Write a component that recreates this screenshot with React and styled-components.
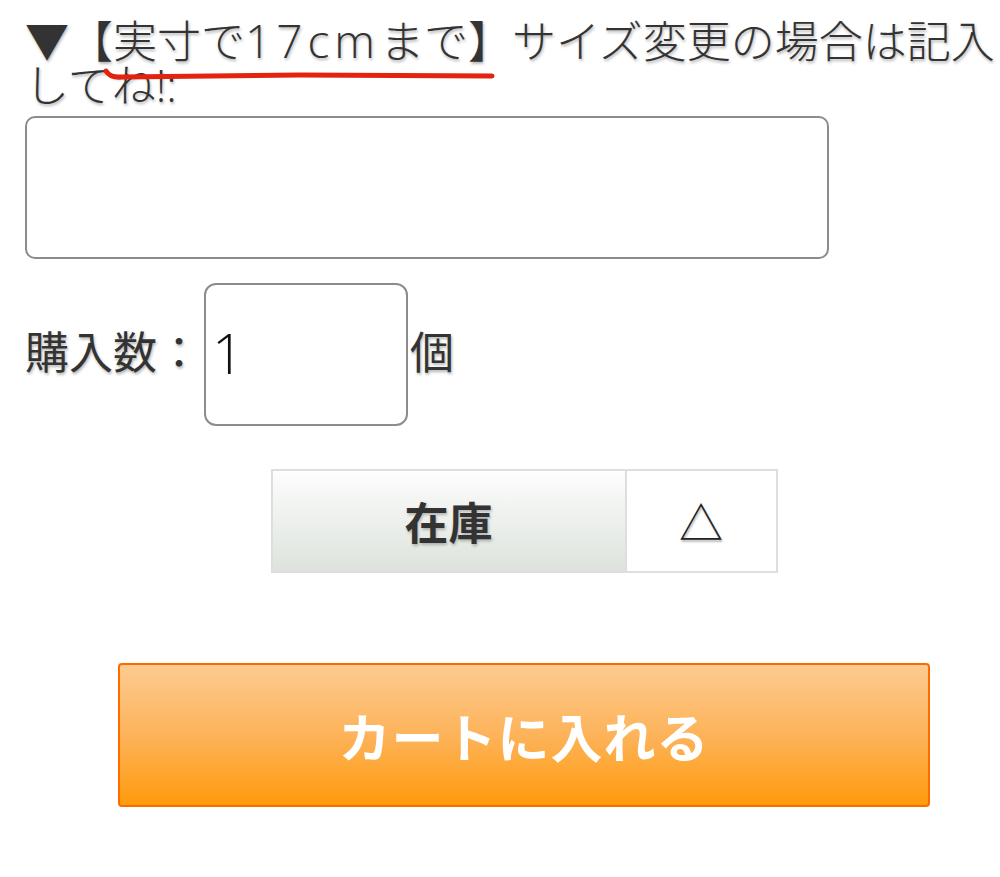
import React from 'react';
import styled, { createGlobalStyle } from 'styled-components';

// global
const GlobalStyle = createGlobalStyle`
  html, body {
    margin: 0;
    padding: 0;
    background: #fff;
    overflow: hidden;
  }
  body {
    font-family: "Noto Sans CJK JP", "Noto Sans", sans-serif;
    color: #333;
  }
`;

// styled-components
const Page = styled.div`
  width: 998px;
  padding: 18px 0 0 25px;
  display: flex;
  flex-direction: column;
`;

const Heading = styled.div`
  position: relative;
  font-family: "Open Sans", "Noto Sans CJK JP", sans-serif;
  font-weight: 300;
  font-size: 44px;
  line-height: 44px;
  white-space: nowrap;
  text-shadow: 1px 2px 3px rgba(0, 0, 0, 0.3);
`;

const Latin = styled.span`
  font-size: 46px;
  letter-spacing: 5px;
`;

const Scribble = styled.svg`
  position: absolute;
  left: -25px;
  top: -18px;
  pointer-events: none;
`;

const Memo = styled.textarea`
  box-sizing: border-box;
  width: 804px;
  height: 143px;
  margin-top: 9px;
  border: 2px solid #8c8c8c;
  border-radius: 10px;
  resize: none;
  outline: none;
`;

const QtyRow = styled.div`
  display: flex;
  align-items: center;
  margin-top: 24px;
  font-size: 44px;
  text-shadow: 1px 2px 3px rgba(0, 0, 0, 0.3);
`;

const QtyLabel = styled.span`
  width: 179px;
  margin-top: -10px;
`;

const QtyInput = styled.input`
  box-sizing: border-box;
  width: 204px;
  height: 143px;
  border: 2px solid #8c8c8c;
  border-radius: 12px;
  padding: 0 0 6px 6px;
  font-family: "Open Sans", sans-serif;
  font-weight: 300;
  font-size: 56px;
  color: #111;
  outline: none;
  background: #fff;
`;

const Unit = styled.span`
  margin-left: 2px;
  margin-top: -10px;
`;

const StockTable = styled.div`
  display: flex;
  align-self: center;
  width: 507px;
  height: 104px;
  margin-top: 43px;
  box-sizing: border-box;
  border: 2px solid #dedede;
  font-size: 44px;
`;

const StockHead = styled.div`
  flex: 0 0 352px;
  display: flex;
  align-items: center;
  justify-content: center;
  font-weight: bold;
  color: #333;
  background: linear-gradient(#fdfdfd, #dde3dc);
  border-right: 2px solid #dedede;
  text-shadow: 1px 2px 3px rgba(0, 0, 0, 0.25);
`;

const StockMark = styled.div`
  flex: 1;
  display: flex;
  align-items: center;
  justify-content: center;
  background: #fff;
  color: #222;
  text-shadow: 1px 2px 2px rgba(0, 0, 0, 0.3);
`;

const CartButton = styled.button`
  align-self: center;
  width: 812px;
  height: 144px;
  margin-top: 90px;
  border: 2px solid #ff6a00;
  border-radius: 4px;
  background: linear-gradient(#fdcb90, #fdb35a 50%, #ff9a0c);
  color: #fff;
  font-family: "Noto Sans CJK JP", sans-serif;
  font-size: 52px;
  font-weight: bold;
  letter-spacing: 1px;
`;
// end styled-components

const App = () => {
  return (
    <Page>
      <GlobalStyle />
      <Heading>
        ▼【実寸で<Latin>17cm</Latin>まで】サイズ変更の場合は記入
        <br />
        してね!:
        <Scribble width="600" height="120" viewBox="0 0 600 120">
          <path
            d="M106 71 Q110 78 122 77 L300 75 L492 76"
            fill="none"
            stroke="#e3230f"
            strokeWidth="5"
            strokeLinecap="round"
          />
        </Scribble>
      </Heading>
      <Memo />
      <QtyRow>
        <QtyLabel>購入数：</QtyLabel>
        <QtyInput defaultValue="1" />
        <Unit>個</Unit>
      </QtyRow>
      <StockTable>
        <StockHead>在庫</StockHead>
        <StockMark>△</StockMark>
      </StockTable>
      <CartButton>カートに入れる</CartButton>
    </Page>
  );
};

export default App;
